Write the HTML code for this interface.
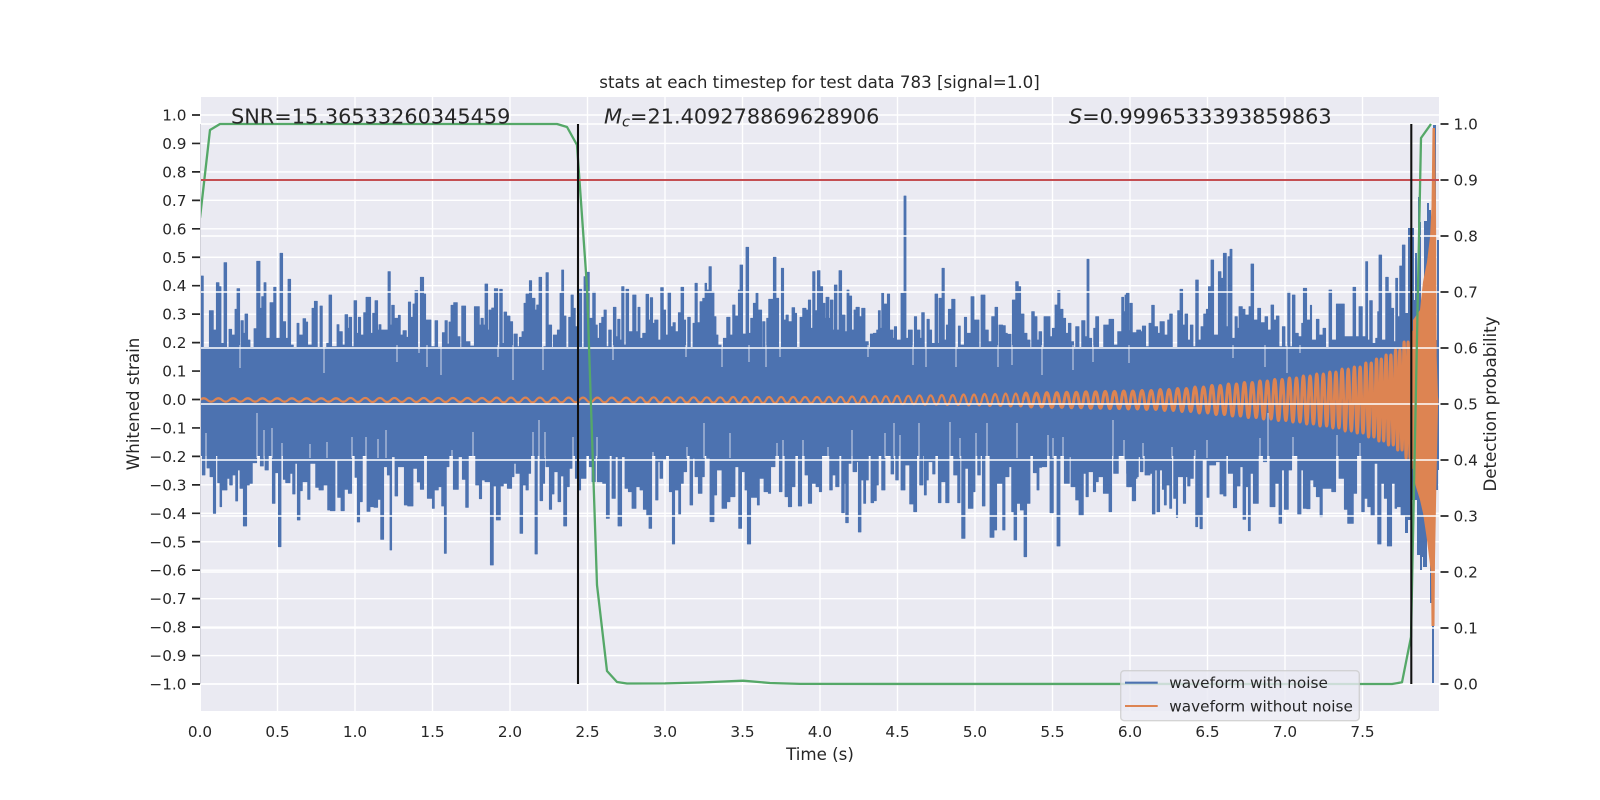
<!DOCTYPE html>
<html><head><meta charset="utf-8"><title>stats</title>
<style>html,body{margin:0;padding:0;background:#fff}svg{display:block}text{font-family:"DejaVu Sans","Liberation Sans",sans-serif;fill:#262626}</style></head>
<body>
<svg width="1600" height="800" viewBox="0 0 1600 800" xmlns="http://www.w3.org/2000/svg">
<defs><clipPath id="ax"><rect x="201" y="97" width="1238" height="614"/></clipPath></defs>
<rect width="1600" height="800" fill="#fff"/>
<rect x="201" y="97" width="1238" height="614" fill="#eaeaf2"/>
<g stroke="#fff" stroke-width="1.39" fill="none">
<path d="M277.5 97V711M355 97V711M432.5 97V711M510 97V711M587.5 97V711M665 97V711M742.5 97V711M820 97V711M897.5 97V711M975 97V711M1052.5 97V711M1130 97V711M1207.5 97V711M1285 97V711M1362.5 97V711"/>
<path d="M201 115H1439M201 143.45H1439M201 171.9H1439M201 200.35H1439M201 228.8H1439M201 257.25H1439M201 285.7H1439M201 314.15H1439M201 342.6H1439M201 371.05H1439M201 399.5H1439M201 427.95H1439M201 456.4H1439M201 484.85H1439M201 513.3H1439M201 541.75H1439M201 570.2H1439M201 598.65H1439M201 627.1H1439M201 655.55H1439M201 684H1439"/>
</g>
<path d="M200.5 124V684" stroke="#d2d2da" stroke-width="1"/>
<g clip-path="url(#ax)">
<g fill="#4c72b0" stroke="#4c72b0" stroke-width="2.4" stroke-linejoin="round">
<g transform="translate(195,240) scale(.33333)">
<path d="M18 480V108H25V330H43V212H55V270H64V128H72V140H78V310H87V68H95V325H102V268H110V285H120V208H126V146H134V380H138V242H145V280H150V222H158V300H165V332H177V266H185V64H195V205H200V170H207V128H213V295H225V188H236V142H243V295H255V40H263V245H272V295H279V118H287V315H295V350H306V250H312V285H324V236H332V246H338V315H351V205H358V184H367V345H375V198H382V360H395V310H402V165H410V320H426V254H432V275H442V315H450V224H458V265H462V232H470V320H477V182H485V280H490V232H497V285H506V218H513V172H527V280H533V220H540V182H548V270H552V254H558V270H579V95H586V255H590V196H598V235H610V226H616V285H624V272H634V292H640V186H647V232H654V192H660V152H668V340H676V112H686V162H692V240H708V320H720V242H728V322H742V278H750V242H757V312H762V246H768V196H776V188H787V290H795V335H800V198H812V305H825V318H838V200H853V255H858V235H865V255H870V132H878V270H882V210H890V204H898V146H908V350H914V148H922V310H927V216H935V228H945V480Z"/>
<path d="M18 480V630H22V705H30V580H36V684H45V710H55V820H62V640H68V728H75V800H80V750H96V715H104V735H112V705H122V783H128V690H135V745H145V858H155V735H163V730H172V668H185V520H196V678H205V570H210V690H220V620H232V790H240V698H250V920H258V640H265V718H272V728H285V700H293V762H300V670H307V840H315V752H322V725H338V778H345V670H362V742H372V750H385V735H398V810H406V812H420V660H428V772H438V812H448V748H460V760H470V610H480V712H487V846H494V785H502V600H516V814H525V800H537V802H548V778H557V898H566V680H577V705H585V930H590V650H600V768H608V680H628V795H638V798H654V685H667V726H676V748H686V640H697V775H712V805H718V750H730V740H740V798H748V940H754V680H762V640H775V748H790V650H802V718H812V802H820V600H842V735H853V776H860V720H870V725H886V975H895V738H904V840H916V738H925V730H937V745H945V480Z"/>
</g>
<g transform="translate(510,240) scale(.33333)">
<path d="M0 480V245H8V395H12V282H22V320H28V292H36V275H42V190H48V162H58V122H65V175H75V210H80V195H87V112H95V390H100V320H108V98H115V255H125V330H130V285H142V270H150V160H155V90H161V228H168V325H176V232H183V165H190V205H196V260H207V148H215V350H222V110H230V97H238V235H248V155H256V255H262V295H268V250H275V232H282V210H289V320H296V270H304V360H310V202H318V290H323V238H330V300H335V140H342V315H348V148H356V275H368V165H378V275H384V202H390V295H398V280H408V163H416V240H421V173H428V250H434V240H444V300H452V143H460V210H467V285H474V158H482V260H489V248H496V275H505V218H513V142H521V240H527V350H533V232H541V325H549V250H555V130H562V248H570V185H578V175H585V130H590V150H597V80H604V155H612V230H618V285H624V315H634V380H640V295H650V232H660V285H668V195H675V228H685V150H690V75H698V282H708V22H716V280H722V235H730V190H738V160H744V210H755V360H758V245H765V380H770V235H776V178H790V52H798V175H806V350H814V85H821V240H828V225H835V245H846V203H854V220H860V345H870V232H878V205H888V210H895V180H902V265H908V95H915V212H922V92H930V140H938V190H945V480Z"/>
<path d="M0 480V745H5V710H12V670H18V700H30V880H38V735H48V750H55V700H62V575H75V942H82V540H90V782H98V730H104V610H108V680H118V808H125V762H132V695H144V785H152V708H161V858H170V740H178V685H186V590H196V715H205V750H212V715H228V600H238V680H246V725H256V590H262V725H278V730H289V835H298V620H306V775H316V650H324V858H335V650H345V745H355V755H366V805H378V740H390V750H400V808H410V825H417V865H425V635H437V780H444V665H450V715H458V660H467V630H478V755H487V912H494V750H506V822H512V730H520V695H530V620H540V795H548V655H555V710H565V760H576V710H583V550H590V655H600V845H612V765H620V690H636V805H650V785H660V770H675V680H686V865H695V695H705V750H712V912H722V772H742V795H748V715H762V755H775V760H782V680H795V610H808V755H816V600H825V770H835V800H845V740H855V630H865V798H875V600H885V705H895V790H905V730H918V740H928V755H935V620H945V480Z"/>
</g>
<g transform="translate(825,190) scale(.33333)">
<path d="M0 630V385H3V322H12V385H16V330H24V420H28V285H36V420H42V242H50V375H60V425H66V300H72V318H80V420H87V360H93V352H103V380H110V355H120V455H130V500H136V432H145V430H155V420H160V362H166V415H170V310H176V342H187V312H194V420H204V445H208V410H215V450H228V310H237V18H243V445H250V420H262V520H268V380H275V420H285V445H290V368H298V525H306V388H313V420H320V460H330V312H338V460H342V325H351V235H358V450H364V405H370V358H380V328H390V530H400V408H406V465H418V382H425V430H438V320H447V390H462V490H468V315H480V420H490V455H500V380H510V352H518V530H522V405H533V407H541V430H547V433H558V525H562V330H572V275H580V290H587V372H597V430H606V450H615V500H620V365H628V380H636V450H642V425H650V500H657V380H675V440H682V415H690V345H698V302H705V358H714V385H722V430H730V400H738V455H746V530H752V410H762V500H770V392H780V440H786V208H792V445H800V515H806V415H812V380H821V485H836V405H852V388H866V465H878V425H890V322H896V365H904V310H912V520H915V340H922V428H936V425H945V630Z"/>
<path d="M0 630V770H6V765H14V900H22V855H32V890H42V760H50V968H58V880H62V998H70V820H78V720H84V845H95V815H100V1026H108V870H116V940H122V870H130V795H138V938H146V932H154V885H160V745H170V900H180V730H186V760H198V852H206V700H212V870H220V735H228V900H240V825H254V942H266V965H275V700H284V885H294V780H298V915H304V870H310V815H323V852H330V795H340V938H348V875H362V938H372V740H386V855H398V938H405V745H410V1045H420V835H430V955H444V905H450V730H458V855H466V745H472V948H480V780H495V1042H507V1020H515V880H533V1020H540V860H552V830H560V965H567V1050H575V940H586V960H597V1100H605V940H615V785H625V848H636V900H642V832H650V830H665V735H675V968H685V770H696V1068H705V790H718V880H733V800H738V890H752V930H762V975H775V850H783V920H790V845H805V905H812V875H820V860H835V910H852V965H860V690H866V850H880V795H890V790H905V890H922V932H932V860H940V790H945V630Z"/>
</g>
<g transform="translate(1125,240) scale(.33333)">
<path d="M0 480V165H5V160H12V272H20V280H35V270H47V275H52V258H62V320H72V250H80V196H88V260H98V280H105V245H118V285H128V240H134V222H142V340H158V212H165V148H173V255H180V222H188V300H196V255H204V320H212V120H220V300H228V260H236V222H244V208H250V140H258V60H266V285H280V95H288V115H295V40H304V260H309V50H315V28H321V295H330V230H337V265H342V200H352V208H360V225H372V200H378V72H386V240H398V205H407V248H420V230H428V270H438V195H446V240H454V228H462V320H472V260H480V320H488V155H495V320H502V165H510V280H520V290H530V250H535V145H545V240H556V196H560V300H574V238H582V285H594V265H602V325H612V150H620V300H634V192H658V290H684V142H692V290H702V200H712V290H722V65H728V300H734V182H742V310H752V295H758V215H762V45H770V300H782V112H790V155H798V205H806V305H812V115H818V230H824V78H832V15H840V480Z"/>
<path d="M0 480V660H5V700H10V740H16V660H22V782H30V715H36V650H46V695H54V615H60V705H75V700H82V822H90V690H96V815H104V690H112V748H118V795H124V735H134V805H140V620H146V775H154V832H158V710H175V790H182V710H188V738H195V715H205V630H212V860H218V830H225V866H232V660H246V772H252V675H272V665H285V762H296V768H303V640H310V700H325V803H335V738H345V680H354V838H362V740H370V872H376V700H385V790H400V595H415V665H425V520H435V800H450V730H462V850H470V690H478V808H490V690H500V590H518V822H528V690H535V805H545V806H555V720H566V740H574V770H585V830H592V745H620V755H632V600H642V715H658V808H668V850H685V760H695V610H710V815H718V775H728V800H738V828H748V670H758V912H768V730H778V775H787V918H800V730H810V805H815V800H828V825H840V480Z"/>
</g>
</g>
<g fill="#4c72b0">
<path d="M1405 400V313H1408V228H1414V300H1415V253H1417V320H1418V197H1420V222H1421V320H1424V221H1427V203H1429V210H1431V240H1433V125H1436V340H1437V240H1439.5V400Z"/>
<path d="M1405 400V533H1408V520H1411V500H1417V555H1420V570H1422V557H1423V567H1427V530H1430V603H1432V683H1434V500H1436V490H1438V470H1439.5V400Z"/>
<rect x="201" y="347" width="1200" height="109"/>
</g>
<path fill="none" stroke="#eaeaf2" stroke-width="1" stroke-opacity=".85" d="M240 345V368M324 345V373M441 345V375M397 345V362M427 345V367M513 345V380M498 345V357M419 345V353M543 345V370M613 345V360M722 345V367M766 345V367M749 345V362M780 345V357M686 345V357M868 345V357M913 345V365M926 345V367M956 345V367M998 345V367M1012 345V365M1042 345V375M1073 345V370M1093 345V362M1129 345V363M1233 345V358M1287 345V373M1300 345V353M1265 345V367
M257 458V413M206 458V433M272 458V428M352 458V437M366 458V437M378 458V439M386 458V430M473 458V432M452 458V450M264 458V430M282 458V443M327 458V442M310 458V444M539 458V420M533 458V432M545 458V432M573 458V437M597 458V437M704 458V423M730 458V433M777 458V443M783 458V440M803 458V440M687 458V447M653 458V452M828 458V447M852 458V430M885 458V433M894 458V423M900 458V435M919 458V423M950 458V422M960 458V438M976 458V433M987 458V423M1017 458V423M1048 458V435M1053 458V438M1063 458V437M1113 458V420M1124 458V440M1195 458V450M1207 458V440M1172 458V447M1143 458V443M1268 458V413M1260 458V438M1293 458V437M1337 458V435M1360 458V443"/>
<path fill="none" stroke="#dd8452" stroke-width="2.2" stroke-linejoin="round" d="M200 400q3.675-3.4 7.35 0t7.35 0t7.35 0t7.35 0t7.35 0t7.35 0t7.35 0t7.35 0t7.35 0t7.35 0t7.35 0t7.35 0t7.35 0t7.35 0t7.35 0t7.35 0t7.35 0t7.35 0t7.35 0t7.35 0
q3.65-4 7.3 0t7.3 0t7.3 0t7.3 0t7.3 0t7.3 0t7.3 0t7.3 0t7.3 0t7.3 0t7.3 0t7.3 0t7.3 0t7.3 0t7.3 0t7.3 0t7.3 0t7.3 0t7.3 0t7.3 0
q3.6-4.8 7.2 0t7.2 0t7.2 0t7.2 0t7.2 0t7.2 0t7.2 0t7.2 0t7.2 0t7.2 0t7.2 0t7.2 0t7.2 0t7.2 0t7.2 0t7.2 0t7.2 0t7.2 0t7.2 0t7.2 0
q3.325-5.4 6.65 0t6.65 0t6.65 0t6.65 0t6.65 0t6.65 0t6.65 0t6.65 0t6.65 0t6.65 0t6.65 0t6.65 0t6.65 0t6.65 0
q3-6 6 0t6 0t6 0t6 0t6 0t6 0t6 0t6 0t6 0t6 0t6 0t6 0t6 0t6 0t6 0t6 0
q2.9-6.4 5.8 0t5.8 0t5.8 0t5.8 0
q2.825-7 5.65 0t5.65 0t5.65 0t5.65 0
q2.8-7.6 5.6 0t5.6 0t5.6 0t5.6 0
q2.8-8.4 5.6 0t5.6 0t5.6 0t5.6 0
q2.8-9.2 5.6 0t5.6 0t5.6 0t5.6 0
q2.725-10 5.45 0t5.45 0t5.45 0t5.45 0
q2.625-11 5.25 0t5.25 0t5.25 0t5.25 0
q2.65-12 5.3 0t5.3 0t5.3 0t5.3 0
q2.525-13 5.05 0t5.05 0t5.05 0t5.05 0"/>
<path fill="none" stroke="#dd8452" stroke-width="3" stroke-linejoin="round" d="M1023.3 400q2.625-14 5.25 0t5.25 0t5.25 0t5.25 0
q2.5-14.8 5 0t5 0t5 0t5 0
q2.4-15.6 4.8 0t4.8 0t4.8 0t4.8 0
q2.425-16.4 4.85 0t4.85 0t4.85 0t4.85 0
q2.325-17.2 4.65 0t4.65 0t4.65 0t4.65 0
q2.275-18 4.55 0t4.55 0t4.55 0t4.55 0
q2.3-19 4.6 0t4.6 0t4.6 0t4.6 0
q2.175-21 4.35 0t4.35 0t4.35 0t4.35 0
q2.175-23 4.35 0t4.35 0t4.35 0t4.35 0
q2.125-26 4.25 0t4.25 0t4.25 0t4.25 0
q2.075-29 4.15 0t4.15 0t4.15 0t4.15 0
q2-32 4 0t4 0t4 0t4 0
q1.95-35 3.9 0t3.9 0t3.9 0t3.9 0
q1.85-38 3.7 0t3.7 0t3.7 0t3.7 0
q1.85-41 3.7 0t3.7 0t3.7 0t3.7 0
q1.75-44 3.5 0t3.5 0t3.5 0t3.5 0
q1.675-48 3.35 0t3.35 0t3.35 0t3.35 0
q1.65-52 3.3 0t3.3 0t3.3 0t3.3 0
q1.525-56 3.05 0t3.05 0t3.05 0t3.05 0
q1.55-62 3.1 0t3.1 0t3.1 0t3.1 0
q1.45-66 2.9 0t2.9 0t2.9 0t2.9 0
q1.35-74 2.7 0t2.7 0t2.7 0t2.7 0
q1.2-82 2.4 0t2.4 0t2.4 0t2.4 0
q1.2-90 2.4 0t2.4 0t2.4 0t2.4 0
q1.075-100 2.15 0t2.15 0t2.15 0t2.15 0
q1-116 2 0t2 0t2 0t2 0
q.9-136 1.8 0t1.8 0t1.8 0t1.8 0"/>
<path fill="#dd8452" d="M1413 320L1420 310L1423 282L1427 262L1430 237L1431.5 207L1432.5 128L1435 128L1436 207L1436.7 357L1438 397L1438.5 401L1438 407L1436.7 467L1435 560L1434.5 626L1431.5 626L1431 573L1427 540L1423 513L1420 500L1416 487L1413 475Z"/>
<path d="M201 124H1439M201 180H1439M201 236H1439M201 292H1439M201 348H1439M201 404H1439M201 460H1439M201 516H1439M201 572H1439M201 628H1439M201 684H1439" stroke="#fff" stroke-width="1.39" fill="none"/>
<path fill="none" stroke="#55a868" stroke-width="2.3" stroke-linejoin="round" d="M200 218L210 130L220 124L557 124L567 127L577 145L587 287L597 585L607 671L617 682L627 683.5L665 683.4L700 682.5L743 680.7L770 683L800 683.9L1392 684L1402 682.3L1411 637L1421 138L1431 124"/>
<path d="M201 180H1439" stroke="#c44e52" stroke-width="2.08"/>
<path d="M578 124V684M1411.3 124V684" stroke="#111" stroke-width="2.08" fill="none"/>
</g>
<path d="M192 115H200M192 143.45H200M192 171.9H200M192 200.35H200M192 228.8H200M192 257.25H200M192 285.7H200M192 314.15H200M192 342.6H200M192 371.05H200M192 399.5H200M192 427.95H200M192 456.4H200M192 484.85H200M192 513.3H200M192 541.75H200M192 570.2H200M192 598.65H200M192 627.1H200M192 655.55H200M192 684H200" stroke="#262626" stroke-width="1.7" fill="none"/>
<path d="M1440.5 124H1448.5M1440.5 180H1448.5M1440.5 236H1448.5M1440.5 292H1448.5M1440.5 348H1448.5M1440.5 404H1448.5M1440.5 460H1448.5M1440.5 516H1448.5M1440.5 572H1448.5M1440.5 628H1448.5M1440.5 684H1448.5" stroke="#262626" stroke-width="1.7" fill="none"/>
<g font-size="15.28" text-anchor="end">
<text x="186.5" y="120.5">1.0</text><text x="186.5" y="149">0.9</text><text x="186.5" y="177.4">0.8</text><text x="186.5" y="205.9">0.7</text><text x="186.5" y="234.3">0.6</text><text x="186.5" y="262.8">0.5</text><text x="186.5" y="291.2">0.4</text><text x="186.5" y="319.7">0.3</text><text x="186.5" y="348.1">0.2</text><text x="186.5" y="376.6">0.1</text><text x="186.5" y="405">0.0</text><text x="186.5" y="433.5">−0.1</text><text x="186.5" y="461.9">−0.2</text><text x="186.5" y="490.4">−0.3</text><text x="186.5" y="518.8">−0.4</text><text x="186.5" y="547.3">−0.5</text><text x="186.5" y="575.7">−0.6</text><text x="186.5" y="604.2">−0.7</text><text x="186.5" y="632.6">−0.8</text><text x="186.5" y="661.1">−0.9</text><text x="186.5" y="689.5">−1.0</text>
</g>
<g font-size="15.28">
<text x="1453.5" y="129.5">1.0</text><text x="1453.5" y="185.5">0.9</text><text x="1453.5" y="241.5">0.8</text><text x="1453.5" y="297.5">0.7</text><text x="1453.5" y="353.5">0.6</text><text x="1453.5" y="409.5">0.5</text><text x="1453.5" y="465.5">0.4</text><text x="1453.5" y="521.5">0.3</text><text x="1453.5" y="577.5">0.2</text><text x="1453.5" y="633.5">0.1</text><text x="1453.5" y="689.5">0.0</text>
</g>
<g font-size="15.28" text-anchor="middle">
<text x="200" y="737">0.0</text><text x="277.5" y="737">0.5</text><text x="355" y="737">1.0</text><text x="432.5" y="737">1.5</text><text x="510" y="737">2.0</text><text x="587.5" y="737">2.5</text><text x="665" y="737">3.0</text><text x="742.5" y="737">3.5</text><text x="820" y="737">4.0</text><text x="897.5" y="737">4.5</text><text x="975" y="737">5.0</text><text x="1052.5" y="737">5.5</text><text x="1130" y="737">6.0</text><text x="1207.5" y="737">6.5</text><text x="1285" y="737">7.0</text><text x="1362.5" y="737">7.5</text>
</g>
<text x="819.5" y="88" font-size="16.67" text-anchor="middle">stats at each timestep for test data 783 [signal=1.0]</text>
<text x="820" y="760" font-size="16.67" text-anchor="middle">Time (s)</text>
<text transform="translate(139,404) rotate(-90)" font-size="16.67" text-anchor="middle">Whitened strain</text>
<text transform="translate(1496,404) rotate(-90)" font-size="16.67" text-anchor="middle">Detection probability</text>
<text x="231" y="123.3" font-size="20.83">SNR=15.36533260345459</text>
<text x="604" y="123.3" font-size="20.83"><tspan font-style="italic">M</tspan><tspan font-style="italic" font-size="14.6" dy="3">c</tspan><tspan dy="-3">=21.409278869628906</tspan></text>
<text x="1069" y="123.3" font-size="20.83"><tspan font-style="italic">S</tspan>=0.9996533393859863</text>
<rect x="1120.7" y="670.7" width="238.6" height="50" rx="3.5" fill="#eaeaf2" fill-opacity=".8" stroke="#cccccc" stroke-opacity=".8" stroke-width="1.39"/>
<path d="M1125 682.7H1157.7" stroke="#4c72b0" stroke-width="2.08"/>
<path d="M1125 706H1157.7" stroke="#dd8452" stroke-width="2.08"/>
<text x="1169.3" y="688" font-size="15.28">waveform with noise</text>
<text x="1169.3" y="711.5" font-size="15.28">waveform without noise</text>
</svg>
</body></html>
